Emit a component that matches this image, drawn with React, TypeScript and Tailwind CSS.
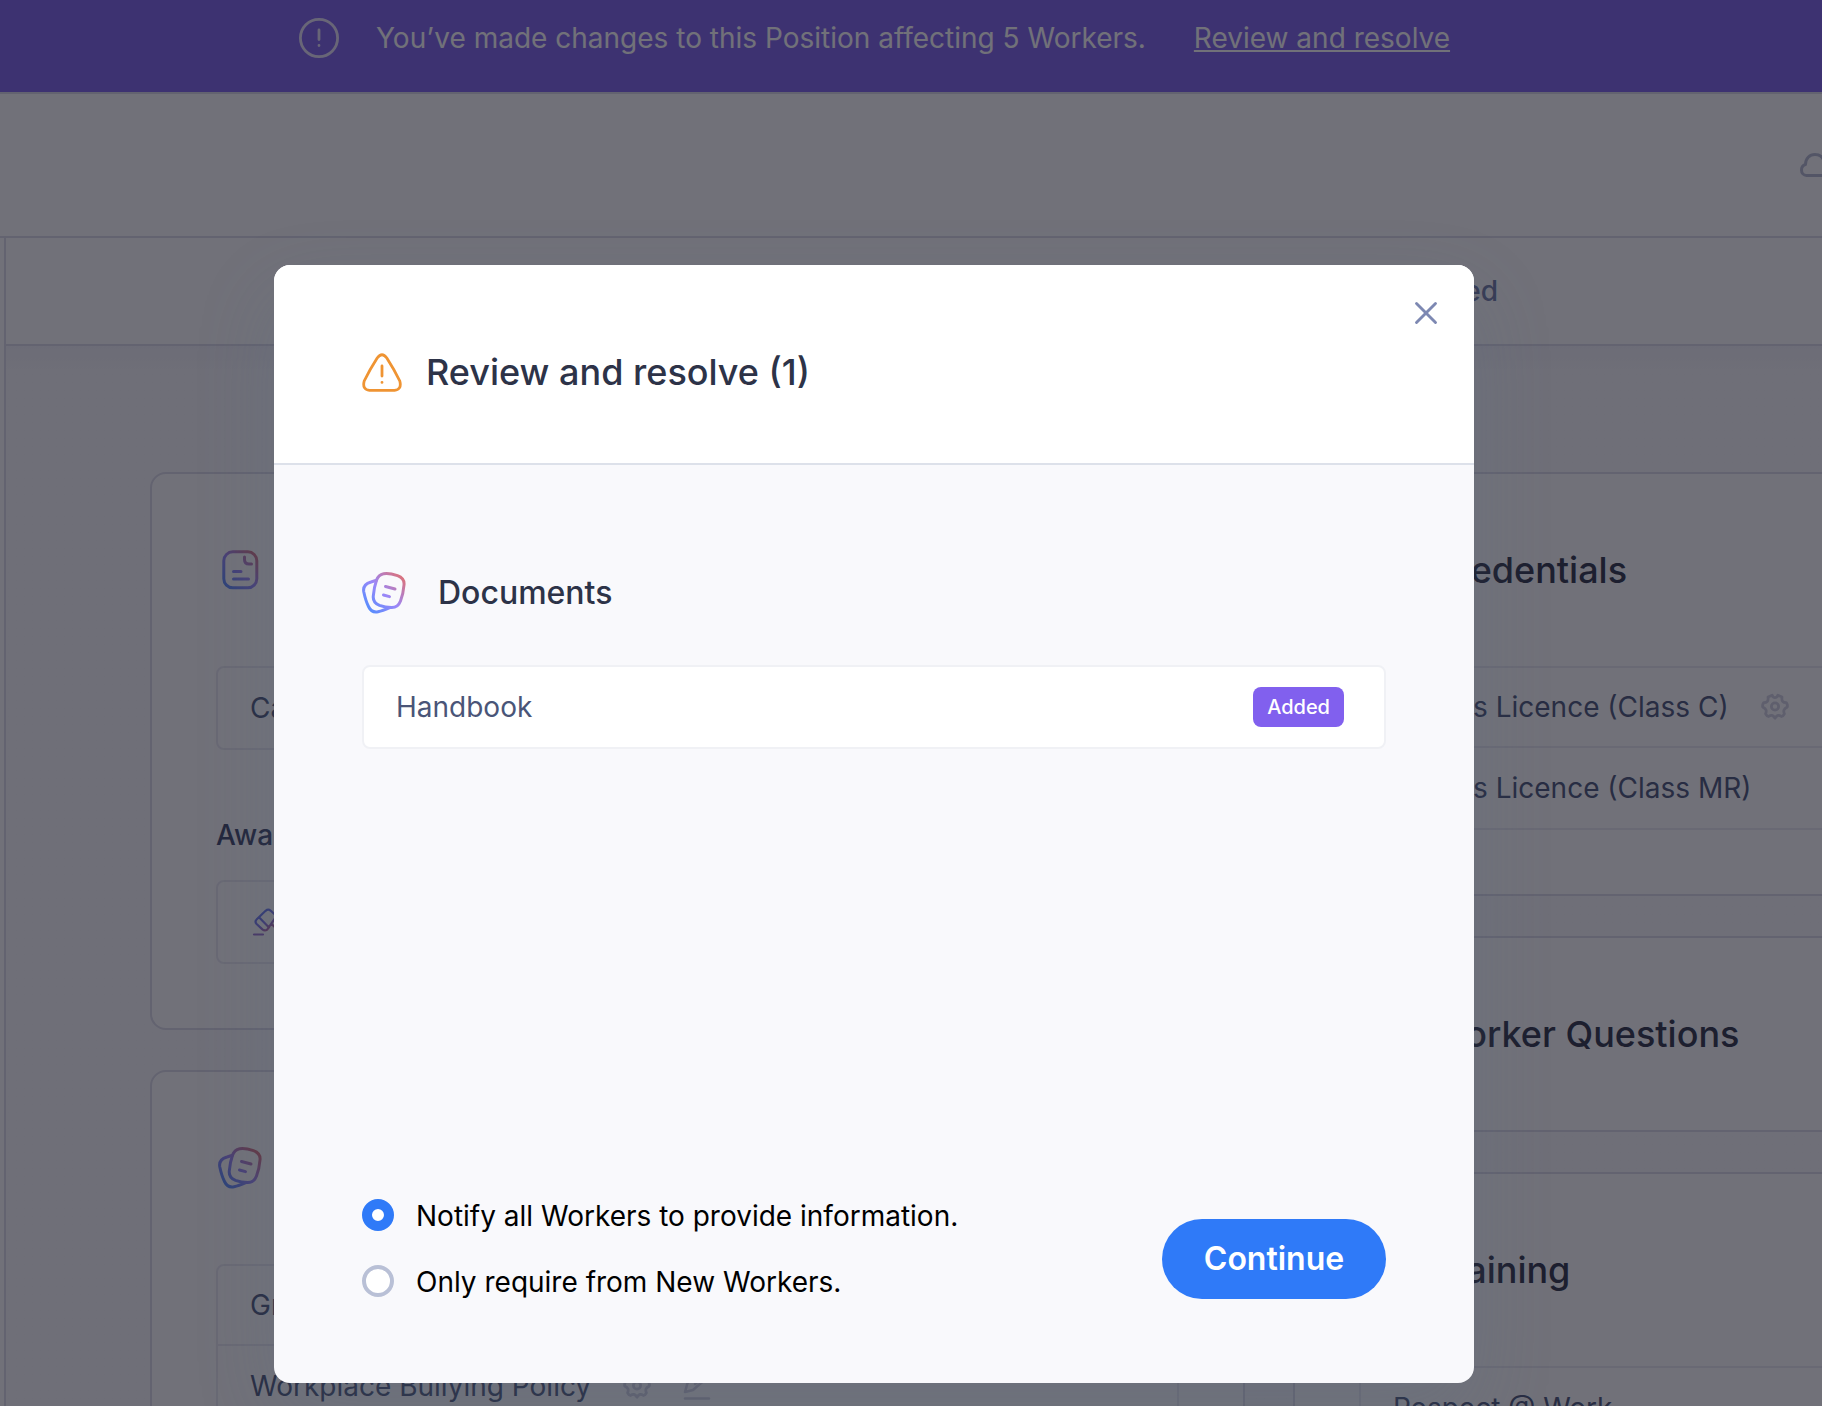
import React from "react";
import { X } from "lucide-react";

function Gradient({ id }: { id: string }) {
  return (
    <defs>
      <linearGradient id={id} x1="4" y1="42" x2="42" y2="4" gradientUnits="userSpaceOnUse">
        <stop offset="0" stopColor="#4d8eff" />
        <stop offset="0.5" stopColor="#9b87f8" />
        <stop offset="1" stopColor="#e07070" />
      </linearGradient>
    </defs>
  );
}

function DocumentsIcon({ id }: { id: string }) {
  return (
    <svg className="h-11 w-11 shrink-0" viewBox="0 0 44 44" fill="none" stroke={`url(#${id})`} strokeWidth="3" strokeLinecap="round" strokeLinejoin="round" aria-hidden="true">
      <Gradient id={id} />
      <path d="M14.5 9.2 L9 11 C3.5 12.6 0.8 15.8 1.8 21 C3 26.5 4.2 31 6.5 35.500 C8.5 39.8 11.5 41.6 16 40.7 C20.5 39.8 24 38.3 28 36.600" />
      <path d="M21.5 2.7 C25 1.9 30.5 2.9 35.5 4.6 C40.5 6.4 42.5 9.5 42 14 C41.6 19 40.4 25 38.5 30 C36.8 34.5 34 36.7 29.5 36.6 C25 36.4 21 35.5 17.5 34.3 C12.8 32.5 10.8 29.5 11.3 24.8 C11.8 19 13 13.5 14.5 9.2 C15.8 5.5 17.8 3.4 21.5 2.7 Z" />
      <path d="M23.5 15.5 L33 18 M21.5 24 L27.5 25.6" />
    </svg>
  );
}

function FormIcon({ id }: { id: string }) {
  return (
    <svg className="h-11 w-11 shrink-0" viewBox="0 0 44 44" fill="none" stroke={`url(#${id})`} strokeWidth="3" strokeLinecap="round" strokeLinejoin="round" aria-hidden="true">
      <Gradient id={id} />
      <rect x="5.8" y="3.8" width="33" height="36" rx="9" />
      <path d="M26.500 9 V11.500 C26.5 15 28 16 31 16 H33.500 M15.5 23.5 H23 M15.5 31 H30.5" />
    </svg>
  );
}

function GavelIcon() {
  return (
    <svg className="h-11 w-11 shrink-0" viewBox="0 0 44 44" fill="none" stroke="url(#gavel)" strokeWidth="2.2" strokeLinecap="round" strokeLinejoin="round" aria-hidden="true">
      <defs>
        <linearGradient id="gavel" x1="10" y1="14" x2="22" y2="30" gradientUnits="userSpaceOnUse">
          <stop offset="0" stopColor="#6678f0" />
          <stop offset="0.5" stopColor="#7f74ea" />
          <stop offset="1" stopColor="#c4628f" />
        </linearGradient>
      </defs>
      <path d="M6.8 19.2 L15.6 10.8 Q18.2 8.600 20.8 10.8 L26.5 16 L17.200 29.600 Q14.800 31.400 12.400 29.400 L6.6 24 Q4.4 21.6 6.8 19.2 Z M9 17.2 L19 27.4 M21.5 24 L33 35" />
      <path d="M4 34.5 H13" stroke="#9a70d0" />
    </svg>
  );
}

function GearIcon() {
  return (
    <svg className="h-7 w-7 shrink-0" viewBox="0 0 28 28" fill="none" stroke="#d2d2e2" strokeWidth="2.8" strokeLinejoin="round" aria-label="Settings">
      <path d="M11.2 2.2 Q12.2 4.6 14 4.6 T16.8 2.2 L21 4 Q20.6 7 21.6 8.3 T25.3 9.6 Q26.8 11.8 26.3 14 Q23.6 15.6 23 17 T23.4 20.8 Q22.4 22.8 20.4 23.5 Q18.4 22 17 22.4 T14 25.2 Q12.5 22.8 11 22.4 T7.6 23.5 Q5.6 22.8 4.6 20.8 Q5.6 18.4 5 17 T1.7 14 Q1.2 11.8 2.7 9.6 Q5.4 9.6 6.4 8.3 T7 4 Z" />
      <circle cx="14" cy="13.5" r="3.6" />
    </svg>
  );
}

function PenIcon() {
  return (
    <svg className="h-7 w-7 shrink-0" viewBox="0 0 28 28" fill="none" stroke="#d2d2e2" strokeWidth="2.6" strokeLinecap="round" strokeLinejoin="round" aria-label="Signature">
      <path d="M2 20 L4.5 11 L15 2 M2 20 L10 18 L25 5 M12 12 L22 3 M2 26.5 H26" />
    </svg>
  );
}

function Card({ icon, title, children }: { icon: React.ReactNode; title: string; children?: React.ReactNode }) {
  return (
    <section className="rounded-2xl border-2 border-[#dcdce8] bg-white px-16">
      <header className="flex h-48 items-center gap-[26px] pl-0.5">
        {icon}
        <h2 className="text-4xl font-medium text-[#2d3348]">{title}</h2>
      </header>
      {children && <div className="pb-16">{children}</div>}
    </section>
  );
}

function List({ children }: { children: React.ReactNode }) {
  return <ul className="divide-y-2 divide-[#ececf3] rounded-lg border-2 border-[#ececf3] bg-white">{children}</ul>;
}

function Row({ children }: { children: React.ReactNode }) {
  return <li className="flex h-20 items-center gap-8 px-8 text-[28px] text-[#4a5578]">{children}</li>;
}

function Page() {
  return (
    <div className="absolute inset-0 flex flex-col overflow-hidden bg-white" aria-hidden="true">
      <div className="flex h-[94px] shrink-0 items-center border-b-2 border-[#dcdce8] bg-[#7e61ec] pb-4 pl-[299px] text-[28px] text-white">
        <svg className="mr-[37px] h-10 w-10" viewBox="0 0 40 40" fill="none" stroke="#e9e4fb" strokeWidth="2.8" strokeLinecap="round">
          <circle cx="20" cy="20" r="18.6" />
          <path d="M20 12 V21.5 M20 27.5 V27.6" />
        </svg>
        <p className="mr-12 whitespace-nowrap">You’ve made changes to this Position affecting 5 Workers.</p>
        <a href="#review" className="whitespace-nowrap underline">Review and resolve</a>
      </div>
      <div className="flex h-36 shrink-0 items-center justify-end border-b-2 border-[#dcdce8]">
        <svg className="-mr-3 h-6 w-[34px]" viewBox="0 0 34 24" fill="none" stroke="#b4bad0" strokeWidth="3" strokeLinejoin="round">
          <path d="M6.5 22.5 C3.5 22.5 1.5 20 1.5 17 C1.5 14.3 3 12.2 5.5 11.5 C5.5 5.5 9.5 1.5 15 1.5 C19.5 1.5 22.8 4 24 8.2 C29 8.2 32.5 11 32.5 15.5 C32.5 19.5 29.5 22.5 26 22.5 Z" />
        </svg>
      </div>
      <div className="ml-1 flex grow flex-col border-l-2 border-[#dcdce8]">
        <nav className="flex h-[108px] shrink-0 items-center justify-end border-b-2 border-[#dcdce8] pr-[324px] text-[28px] font-medium text-[#6e7aa6]">
          <a href="#archived">Archived</a>
        </nav>
        <div className="flex grow items-start gap-12 bg-linear-to-b from-[#f3f3f9] to-[#f9f9fc] to-[24px] pt-[126px] pl-36">
          <div className="flex w-[1095px] shrink-0 flex-col gap-10">
            <Card icon={<FormIcon id="form" />} title="Position">
              <List><Row>Casual</Row></List>
              <h3 className="mt-16 mb-6 text-[28px] leading-[42px] font-medium text-[#3d4769]">Award</h3>
              <List><Row><GavelIcon /></Row></List>
            </Card>
            <Card icon={<DocumentsIcon id="docs-page" />} title="Documents">
              <List>
                <Row>Grievance Policy</Row>
                <Row>Workplace Bullying Policy<GearIcon /><PenIcon /></Row>
              </List>
            </Card>
          </div>
          <div className="flex w-[1095px] shrink-0 flex-col gap-10">
            <Card icon={<FormIcon id="cred" />} title="Credentials">
              <List>
                <Row>Drivers Licence (Class C)<GearIcon /></Row>
                <Row>Drivers Licence (Class MR)</Row>
              </List>
            </Card>
            <Card icon={<FormIcon id="questions" />} title="Worker Questions" />
            <Card icon={<FormIcon id="training" />} title="Training">
              <List><Row>Respect @ Work</Row></List>
            </Card>
          </div>
        </div>
      </div>
    </div>
  );
}

function Option({ label, defaultChecked }: { label: string; defaultChecked?: boolean }) {
  return (
    <label className="flex items-start gap-[22px] text-[28px] leading-[34px] whitespace-nowrap text-black">
      <input
        type="radio"
        name="scope"
        defaultChecked={defaultChecked}
        className="h-8 w-8 appearance-none rounded-full border-4 border-[#b9c0d6] bg-white checked:border-[10px] checked:border-[#2f7af8]"
      />
      {label}
    </label>
  );
}

function ReviewDialog() {
  return (
    <div role="dialog" aria-labelledby="review-title" className="relative flex min-h-[1118px] w-[1200px] flex-col overflow-hidden rounded-2xl bg-[#f9f9fc] shadow-[0_32px_80px_rgba(90,116,140,0.2)]">
      <button type="button" aria-label="Close" className="absolute top-7 right-7 grid h-10 w-10 place-items-center text-[#7d88b2]">
        <X size={38} strokeWidth={1.8} />
      </button>
      <header className="flex items-center gap-6 border-b-2 border-[#dde1ea] bg-white px-[88px] pt-20 pb-16">
        <svg className="h-10 w-10" viewBox="0 0 40 40" fill="none" stroke="#ef9433" strokeWidth="2.8" strokeLinecap="round" strokeLinejoin="round" aria-hidden="true">
          <path d="M15.2 6 Q20 -0.5 24.8 6 Q32.500 18 37.800 29 Q40 37.500 32.500 38.400 H7.500 Q0 37.500 2.200 29 Q7.500 18 15.2 6 Z" />
          <path d="M20 14 V24 M20 30.300 V30.400" />
        </svg>
        <h1 id="review-title" className="text-4xl leading-[54px] font-medium text-[#2d3348]">Review and resolve (1)</h1>
      </header>
      <div className="flex grow flex-col px-[88px] pt-[104px] pb-[84px]">
        <div className="mb-12 flex items-center gap-8">
          <DocumentsIcon id="docs" />
          <h2 className="text-[32px] leading-[48px] font-medium text-[#2d3348]">Documents</h2>
        </div>
        <ul className="rounded-lg border-2 border-[#f0f1f5] bg-white">
          <li className="flex h-20 items-center justify-between pr-10 pl-8 text-[28px] text-[#4a5578]">
            Handbook
            <span className="rounded-lg bg-[#8160ee] px-3.5 text-xl leading-10 font-medium text-white">Added</span>
          </li>
        </ul>
        <form className="mt-auto flex items-end justify-between">
          <fieldset className="flex flex-col gap-8">
            <Option label="Notify all Workers to provide information." defaultChecked />
            <Option label="Only require from New Workers." />
          </fieldset>
          <button type="button" className="h-20 w-56 rounded-full bg-[#2f7af8] text-[32px] font-semibold text-white">Continue</button>
        </form>
      </div>
    </div>
  );
}

export default function App() {
  return (
    <main className="relative min-h-screen overflow-hidden font-['Inter',sans-serif]">
      <Page />
      <div className="relative flex min-h-screen items-start justify-center bg-[#121220]/60 pt-[265px] pr-[74px]">
        <ReviewDialog />
      </div>
    </main>
  );
}
